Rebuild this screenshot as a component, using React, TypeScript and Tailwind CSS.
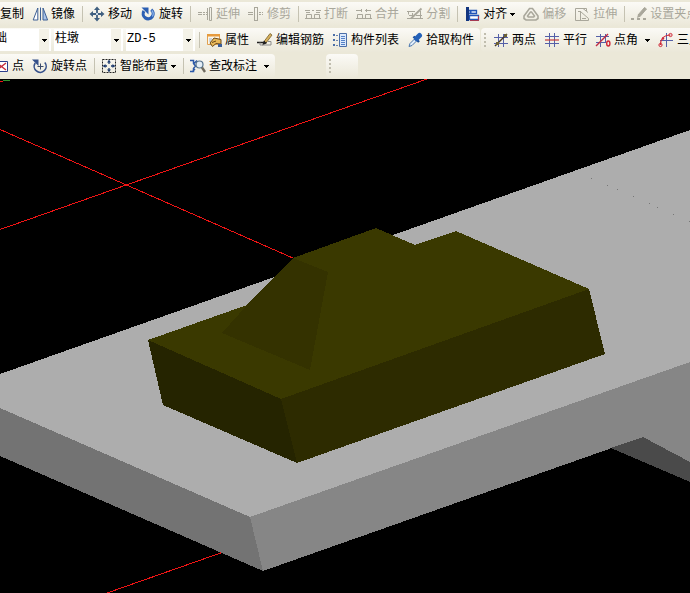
import type { ReactNode } from "react";

const GREY = "#a9a79b";

function Glyph({ children }: { children: ReactNode }) {
  return (
    <svg className="w-4 h-4 shrink-0" viewBox="0 0 16 16" fill="none" aria-hidden>
      {children}
    </svg>
  );
}

const icons = {
  copy: (
    <Glyph>
      <path d="M2.5 2.5h7v9h-7zM6.5 5.500h7v9h-7z" fill="#fff" stroke="#2b4f8f" />
    </Glyph>
  ),
  mirror: (
    <Glyph>
      <path d="M5.800 2v12h-4.600z" fill="#fff" stroke="#3d5f94" />
      <path d="M8.500 1.500v13" stroke="#3d5f94" />
      <path d="M11 2v12h4.600z" fill="#a9c4ea" stroke="#3d5f94" />
    </Glyph>
  ),
  move: (
    <Glyph>
      <path d="M8 3v10M3 8h10" stroke="#3f5f80" strokeWidth="1.800" />
      <path d="M8 .5 5 4h6zM8 15.500 5 12h6zM.5 8 4 5v6zM15.500 8 12 5v6z" fill="#3f5f80" />
      <path d="M7 7h2v2H7z" fill="#c9d8e6" />
    </Glyph>
  ),
  rotate: (
    <Glyph>
      <path d="M11.200 3.800a5 5 0 1 1-7.200 1.200" stroke="#2c5fb3" strokeWidth="3.200" />
      <path d="M11.800 4.500a5 5 0 0 1 .6 6" stroke="#8db4ea" strokeWidth="1.300" />
      <path d="M1.500 1.500h7v7z" fill="#2c5fb3" />
    </Glyph>
  ),
  extend: (
    <Glyph>
      <path d="M1 6.500h4M1 8.500h4M6 6.500h2M6 8.500h2M9 6.500h1M9 8.500h1M10.500 2v12M12.500 1.500h2v13h-2z" stroke={GREY} />
    </Glyph>
  ),
  trim: (
    <Glyph>
      <path d="M6.500 1.500v13M9.500 1.500v13M0 6.500h5M0 8.500h5M11 6.500h2M11 8.500h2M14 6.500h1M14 8.500h1M6 1.500h4M6 14.500h4" stroke={GREY} />
    </Glyph>
  ),
  breakAt: (
    <Glyph>
      <path d="M0 4.500h5M7 4.500h2M11 4.500h5M1.500 8.500h5v4h-5zM9.500 8.500h5v4h-5zM1 6.500h4M11 6.500h4M0 12.500h16" stroke={GREY} />
    </Glyph>
  ),
  merge: (
    <Glyph>
      <path d="M0 4.500h6M9 4.500h6M5.500 3v3M10.500 3v3M1.500 8.500h5v4h-5zM9.500 8.500h5v4h-5zM0 12.500h16" stroke={GREY} />
    </Glyph>
  ),
  split: (
    <Glyph>
      <path d="M0 5.500h8M1.500 5.500v3M0 12.500h16M2 9.500h4M9 9.500h6M13.500 5v7M5.500 7v5" stroke={GREY} />
      <path d="M4 12.500 14.500 2.500" stroke={GREY} strokeWidth="1.800" />
    </Glyph>
  ),
  align: (
    <Glyph>
      <path d="M2 1h3v14H2z" fill="#12357f" />
      <path d="M5 4.500h7.500v3H5" fill="#dfeafb" stroke="#2154b8" strokeWidth="1.300" />
      <path d="M5.500 9.500h9v4h-9z" fill="#fff" stroke="#2154b8" strokeWidth="1.300" />
      <path d="M6 14.500h9M14.500 10v5" stroke="#a53a52" />
      <path d="M5 6 7.500 4v4z" fill="#2154b8" />
    </Glyph>
  ),
  offset: (
    <Glyph>
      <path d="M6.500 2.500h3l5.500 7.500v2.500l-2 1.500H3l-2-1.500V10z" stroke={GREY} strokeWidth="1.600" />
      <path d="M7.500 6h1l3 4-.8 1H5.300l-.8-1z" stroke={GREY} strokeWidth="1.500" />
    </Glyph>
  ),
  stretch: (
    <Glyph>
      <path d="M12.500 5V2.500h-11v12H7M6.500 5.500l8 7v2H6.500zM4 5.500h3M9 2.500l5 4" stroke={GREY} />
      <path d="M8 12.500h4" stroke={GREY} />
    </Glyph>
  ),
  grips: (
    <Glyph>
      <path d="M7 9 13.500 1.500l2 1.500L9 10.500z" fill={GREY} stroke={GREY} />
      <path d="M7 8.500 6 12l3.500-1.500z" fill={GREY} />
      <path d="M0 12h3v2H0zM6 12h3v2H6zM12 12h3v2h-3z" fill={GREY} />
    </Glyph>
  ),
  props: (
    <Glyph>
      <path d="M1.500 2.500h12v10h-12z" fill="#fdf6e6" stroke="#e0a050" />
      <path d="M1 2h13v2.500H1z" fill="#e79a3c" />
      <path d="M3 7h3M3 9h2" stroke="#9db1d0" />
      <path d="M4 11 8 6l7 1.500V12l-5-.5-3.500 3z" fill="#e9b95a" stroke="#6a4b1c" />
      <path d="M6 10.500 10 9" stroke="#6a4b1c" />
      <path d="M12 12h4v3h-4z" fill="#3b5e9a" />
    </Glyph>
  ),
  editBar: (
    <Glyph>
      <path d="M7 9.500 13 1.500l2 1.500-6 8z" fill="#d8b15c" stroke="#77602c" strokeWidth=".8" />
      <path d="M0 10.500h8M7.500 9 6.500 12l3-1.500" stroke="#202020" strokeWidth="1.500" />
      <path d="M3 10.500v2.500h11M11 9.500h3v3.500" stroke="#8c8c8c" />
    </Glyph>
  ),
  list: (
    <Glyph>
      <path d="M1 2h2v2H1zM1 7h2v2H1zM1 12h2v2H1z" fill="#4b6ea8" />
      <path d="M4 3.500h2M4 8.500h2M4 13.500h2" stroke="#6f86ad" />
      <path d="M7.500 1.500h7v13h-7z" fill="#dce9fb" stroke="#4b6ea8" />
      <path d="M9 4.500h4M9 6.500h4M9 8.500h4M9 10.500h4M9 12.500h4" stroke="#5581c6" />
    </Glyph>
  ),
  pick: (
    <Glyph>
      <path d="M2 14.500 3 11.500 9 5.500 11 7.500 5 13.500z" fill="#e4effb" stroke="#4a76ad" />
      <path d="M6.500 4.500 12 10" stroke="#174a94" strokeWidth="2.400" />
      <path d="M9.500 6.500 12.500 3.500" stroke="#2461b8" strokeWidth="5" strokeLinecap="round" />
    </Glyph>
  ),
  twoPoint: (
    <Glyph>
      <path d="M5.500 2v13M10.500 2v13M1 5.500h14M1 11.500h14" stroke="#5560a8" />
      <path d="M2 14 14 2" stroke="#4a3820" strokeWidth="1.400" />
      <path d="M11 2h3v3h-3zM3 10h3v3H3z" fill="#6d6134" />
    </Glyph>
  ),
  parallel: (
    <Glyph>
      <path d="M5.500 1v14M10.500 1v14M1 4.500h14M1 11.500h14" stroke="#5560a8" />
      <path d="M1 8h14" stroke="#c43a3a" strokeWidth="1.200" />
    </Glyph>
  ),
  pointAngle: (
    <Glyph>
      <path d="M5.500 2v13M10.500 2v9M1 4.500h13M1 10.500h10" stroke="#5560a8" />
      <path d="M1 14 13 2" stroke="#c22c44" strokeWidth="1.400" />
      <ellipse cx="13.300" cy="11.500" rx="1.600" ry="2.500" stroke="#d02838" strokeWidth="1.400" />
    </Glyph>
  ),
  threePoint: (
    <Glyph>
      <path d="M8.500 1v14M2 8.500h13" stroke="#5560a8" />
      <path d="M2.500 13C2.500 7 6 3 12.500 3" stroke="#d02838" strokeWidth="1.200" />
      <circle cx="2.500" cy="13" r="1.600" stroke="#d02838" />
      <circle cx="12.500" cy="3" r="1.600" stroke="#d02838" />
      <circle cx="5" cy="6.500" r="1.200" fill="#d02838" />
    </Glyph>
  ),
  point: (
    <Glyph>
      <path d="M2.500 3.500h12v10h-12z" fill="#fff" stroke="#2d3f8c" />
      <path d="M4 5l9 7M13 5l-9 7" stroke="#c62b3a" strokeWidth="1.300" />
    </Glyph>
  ),
  rotatePoint: (
    <Glyph>
      <path d="M3.200 5a6 6 0 1 0 9.600-.5" stroke="#35508a" strokeWidth="1.600" />
      <path d="M0 1.500h6.500V8z" fill="#35508a" />
      <path d="M8.500 5.500v6M5.500 8.500h6" stroke="#3a4a6a" />
    </Glyph>
  ),
  smart: (
    <Glyph>
      <path d="M1.500 1.500h13v13h-13z" stroke="#222" strokeDasharray="2 1" />
      <path d="M8 2.500v3.500M8 10v3.500M2.500 8H6M10 8h3.500" stroke="#1d3a6e" strokeWidth="1.300" />
      <path d="M8 2 6 4.500h4zM8 14l-2-2.500h4zM2 8l2.500-2v4zM14 8l-2.500-2v4z" fill="#1d3a6e" />
    </Glyph>
  ),
  inspect: (
    <Glyph>
      <path d="M0 2.500h3.500v3l2 2.500-2 2.500v3H0M4 5.500l3-3M5 11l-3 3" stroke="#2c59a8" strokeWidth="1.500" />
      <circle cx="9.500" cy="6.500" r="3.500" fill="#e3edf5" stroke="#54718c" strokeWidth="1.200" />
      <path d="M12 9.500 15 14" stroke="#6f6a5e" strokeWidth="2.400" />
    </Glyph>
  ),
};

function Arrow() {
  return (
    <svg className="w-[5px] h-[3px] shrink-0" viewBox="0 0 5 3" shapeRendering="crispEdges" aria-hidden>
      <path d="M0 0h5v1h-1v1h-1v1h-1v-1h-1v-1h-1z" fill="#000" />
    </svg>
  );
}

type ToolProps = {
  icon: keyof typeof icons;
  label: string;
  disabled?: boolean;
  menu?: "inline" | "split";
};

function Tool({ icon, label, disabled, menu }: ToolProps) {
  return (
    <button
      type="button"
      disabled={disabled}
      className="flex h-6 shrink-0 items-center px-1 whitespace-nowrap text-black disabled:text-[#a9a79b]"
    >
      {icons[icon]}
      <span className="ml-[3px]">{label}</span>
      {menu === "inline" && <span className="ml-[3px]"><Arrow /></span>}
      {menu === "split" && <span className="ml-[7px]"><Arrow /></span>}
    </button>
  );
}

function Divider() {
  return <div className="mr-0.5 ml-[3px] h-4 w-px shrink-0 bg-[#c5c2b2]" />;
}

function Grip() {
  return (
    <div className="mx-[3px] flex shrink-0 flex-col gap-0.5">
      <i className="size-0.5 bg-[#c0bdae]" />
      <i className="size-0.5 bg-[#c0bdae]" />
      <i className="size-0.5 bg-[#c0bdae]" />
      <i className="size-0.5 bg-[#c0bdae]" />
    </div>
  );
}

function Combo({ label, options }: { label: string; options: string[] }) {
  return (
    <label className="relative flex w-[69px] shrink-0 items-center bg-white">
      <select
        aria-label={label}
        className="h-[22px] w-full appearance-none bg-transparent pb-0.5 pl-px font-['Liberation_Mono','Noto_Sans_CJK_SC',monospace] leading-4"
      >
        {options.map((o) => (
          <option key={o}>{o}</option>
        ))}
      </select>
      <span className="pointer-events-none absolute inset-y-0 right-0.5 flex w-2.5 items-center justify-center bg-[#f4f2e8]">
        <Arrow />
      </span>
    </label>
  );
}

const strip = "flex h-6 items-center bg-linear-to-b from-[#fbfaf6] to-[#ebe8d9]";

function Toolbars() {
  return (
    <header className="overflow-hidden bg-[#ebe8d8] pt-px">
      <div className="flex h-[26px] items-center">
        <div className={`${strip} -ml-[23px] flex-1`}>
          <Tool icon="copy" label="复制" />
          <Tool icon="mirror" label="镜像" />
          <Divider />
          <Tool icon="move" label="移动" />
          <Tool icon="rotate" label="旋转" />
          <Divider />
          <Tool icon="extend" label="延伸" disabled />
          <Tool icon="trim" label="修剪" disabled />
          <Divider />
          <Tool icon="breakAt" label="打断" disabled />
          <Tool icon="merge" label="合并" disabled />
          <Tool icon="split" label="分割" disabled />
          <Divider />
          <Tool icon="align" label="对齐" menu="inline" />
          <Tool icon="offset" label="偏移" disabled />
          <Tool icon="stretch" label="拉伸" disabled />
          <Divider />
          <Tool icon="grips" label="设置夹点" disabled />
        </div>
      </div>

      <div className="flex h-[26px] items-center">
        <div className={`${strip} -ml-[18px] shrink-0 rounded-r-sm pr-0.5`}>
          <div className="mr-px flex gap-[3px]">
            <Combo label="构件类型" options={["基础"]} />
            <Combo label="构件类别" options={["柱墩"]} />
            <Combo label="构件名称" options={["ZD-5"]} />
          </div>
          <Divider />
          <Tool icon="props" label="属性" />
          <Tool icon="editBar" label="编辑钢筋" />
          <Tool icon="list" label="构件列表" />
          <Tool icon="pick" label="拾取构件" />
        </div>
        <div className={`${strip} ml-px flex-1 rounded-l-sm`}>
          <Grip />
          <Tool icon="twoPoint" label="两点" />
          <Tool icon="parallel" label="平行" />
          <Tool icon="pointAngle" label="点角" menu="split" />
          <Tool icon="threePoint" label="三点辅轴" />
        </div>
      </div>

      <div className="flex h-[26px] items-center">
        <div className={`${strip} -ml-[11px] shrink-0 rounded-r-sm pr-0.5`}>
          <Tool icon="point" label="点" />
          <Tool icon="rotatePoint" label="旋转点" />
          <Divider />
          <Tool icon="smart" label="智能布置" menu="inline" />
          <Divider />
          <Tool icon="inspect" label="查改标注" menu="split" />
        </div>
        <div className={`${strip} ml-[51px] w-8 rounded-sm`}>
          <Grip />
        </div>
      </div>
    </header>
  );
}

const SPECKS = [
  [591, 178], [607, 185], [617, 189], [633, 196],
  [649, 203], [657, 207], [673, 214], [689, 221],
];

function Viewport() {
  return (
    <svg
      className="block h-auto w-full"
      viewBox="0 79 690 514"
      shapeRendering="crispEdges"
      role="img"
      aria-label="柱墩 ZD-5"
    >
      {/* axis lines */}
      <g stroke="#f01414" strokeWidth="1">
        <path d="M0 229.500 427 79M0 129.500 294 258.500M107 593 222 552.500" />
        <path d="M0 81.500h3" />
      </g>
      <path d="M3 80.500h7" stroke="#2f8f2f" />

      {/* slab */}
      <path d="M0 374 690 130V362L250 518 0 408z" fill="#adadad" />
      <path d="M0 408 250 517 263 571 0 456z" fill="#737373" />
      <path d="M250 517 690 362V462L643 437 263 571z" fill="#868686" />
      <path d="M611 448 643 437 690 462V482z" fill="#4a4a4a" />
      {SPECKS.map(([x, y]) => (
        <rect key={x} x={x} y={y} width="1" height="1" fill="#777" />
      ))}

      {/* column pier */}
      <path d="M148 340 247 305 293 258 376 228 415 245 456 231 589 289 281 399z" fill="#3a3900" />
      <path d="M293 258 328 272 310 370 222 333 247 305z" fill="#343200" />
      <path d="M148 340 281 399 297 463 163 405z" fill="#252400" />
      <path d="M281 399 589 289 605 354 297 463z" fill="#2d2b00" />
    </svg>
  );
}

export default function App() {
  return (
    <div className="min-h-screen overflow-hidden bg-black font-['Liberation_Sans','Noto_Sans_CJK_SC',sans-serif] text-xs">
      <Toolbars />
      <main>
        <Viewport />
      </main>
    </div>
  );
}
